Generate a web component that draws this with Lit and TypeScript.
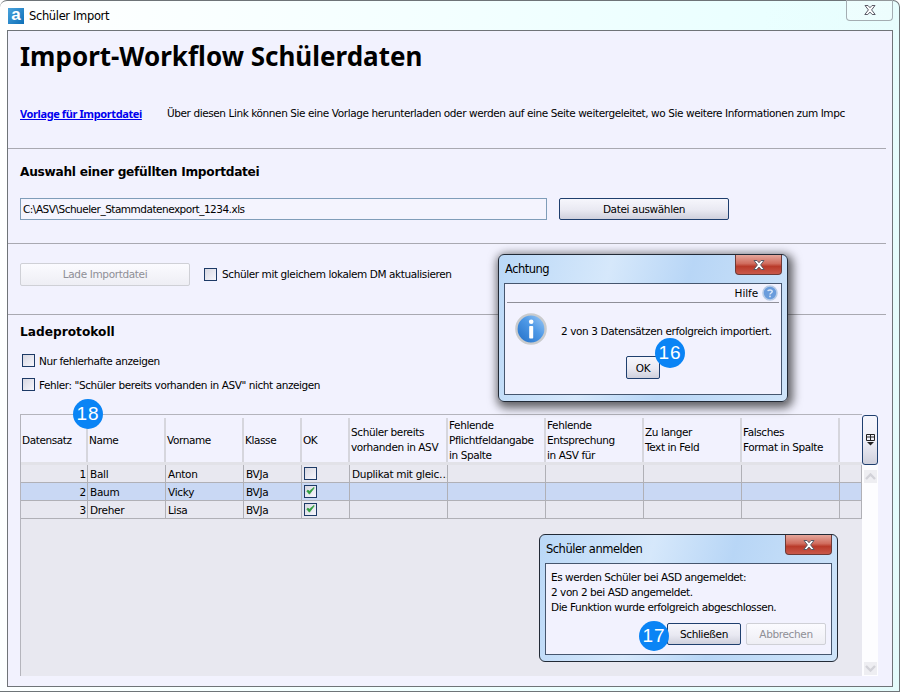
import { LitElement, html, css, svg } from "lit";
import { customElement } from "lit/decorators.js";

const closeX = svg`<svg class="xicon" width="16" height="12" viewBox="0 0 16 12"><path d="M3 1.5h3l2 2.2 2-2.2h3l-3.4 4.4 3.6 4.6h-3L8 8.1l-2.2 2.4h-3l3.6-4.6z" fill="#fff" stroke="#5a5a66" stroke-width="1" stroke-linejoin="round"/></svg>`;
const check = svg`<svg width="11" height="11" viewBox="0 0 11 11"><path d="M1.8 5.2l2.6 3 4.8-6.2-0.2-0.6-4.6 3.8-1.6-1.2z" fill="#2f9e3f" stroke="#2f9e3f" stroke-width=".7"/></svg>`;

const rows = [
  { n: 1, name: "Ball", first: "Anton", cls: "BVJa", ok: false, dup: "Duplikat mit gleic…", sel: false },
  { n: 2, name: "Baum", first: "Vicky", cls: "BVJa", ok: true, dup: "", sel: true },
  { n: 3, name: "Dreher", first: "Lisa", cls: "BVJa", ok: true, dup: "", sel: false },
];

@customElement("app-root")
export class AppRoot extends LitElement {
  static styles = css`
    :host { display: block; width: 900px; height: 692px; overflow: hidden; font-family: "DejaVu Sans", Verdana, sans-serif; font-size: 10.5px; color: #000; }
    * { box-sizing: border-box; }
    .window { position: relative; width: 900px; height: 692px; display: flex; flex-direction: column; padding: 0 6px 4px 7px;
      background: linear-gradient(100deg, #ffffff 0%, #f4ffff 40%, #eaffff 75%, #e4fbfb 100%);
      border: 1px solid #6e7478; border-width: 1px 1px 1px 0; border-radius: 7px 7px 0 0; }
    .titlebar { height: 29px; flex: none; display: flex; align-items: center; gap: 5px; padding: 0 0 0 1px; position: relative; font-size: 11.5px; letter-spacing: -0.35px; }
    .logo { width: 16px; height: 16px; background: linear-gradient(135deg, #4aa3dc, #0d6fb8); color: #fff; font: bold 17px/13px "Liberation Sans", sans-serif; text-align: center; letter-spacing: 0; }
    .win-close { position: absolute; right: 0; top: -1px; width: 47px; height: 21px; border: 1px solid #a4adb2; border-top: none; border-radius: 0 0 4px 4px; display: flex; align-items: center; justify-content: center; background: rgba(255,255,255,.25); }
    .panel { flex: 1; border: 1px solid #6f7478; background: #f2f2fe; display: flex; flex-direction: column; padding: 0 6px 0 0; min-height: 0; }
    h1 { margin: 9px 0 0 12px; font-size: 26px; line-height: 32px; font-weight: bold; font-family: "Noto Sans", sans-serif; letter-spacing: 0; }
    .linkrow { display: flex; margin: 33px 0 0 12px; height: 16px; align-items: center; white-space: nowrap; overflow: hidden; width: 826px; }
    .link { color: #0000ee; font-weight: bold; text-decoration: underline; width: 147px; flex: none; font-family: "Noto Sans", sans-serif; font-size: 11px; letter-spacing: -0.39px; }
    .hint { letter-spacing: -0.41px; }
    .hr { height: 1px; background: #a9a9b1; flex: none; }
    .hr1 { margin-top: 27px; }
    .hr2 { margin-top: 23px; }
    .hr3 { margin-top: 28px; }
    h2 { margin: 0 0 0 12px; font-size: 12.2px; line-height: 16px; font-weight: bold; letter-spacing: -0.28px; }
    .h2a { margin-top: 15px; }
    .h2b { margin-top: 9px; letter-spacing: 0; }
    .filerow { display: flex; margin: 18px 0 0 12px; gap: 12px; }
    .input { width: 527px; height: 22px; border: 1px solid #7f9db9; background: #f4f4fe; padding: 0 2px; line-height: 20px; letter-spacing: -0.5px; }
    .btn { display: flex; align-items: center; justify-content: center; border: 1px solid #1f3f6e; border-radius: 2px; background: linear-gradient(180deg, #f6f6fc 0%, #e9e9f2 55%, #cfd0dc 100%); letter-spacing: -0.36px; white-space: nowrap; }
    .btn.dis { border-color: #cfd0d6; color: #8f8f96; background: linear-gradient(180deg, #fbfbff, #eeeef4); }
    .file-btn { width: 170px; height: 22px; }
    .loadrow { display: flex; align-items: center; margin: 18px 0 0 12px; height: 24px; }
    .load-btn { width: 170px; height: 23px; margin-right: 14px; }
    .cb { width: 13px; height: 13px; border: 1px solid #1d3a66; background: linear-gradient(135deg, #d8d8e2, #f6f6fc); display: inline-flex; align-items: center; justify-content: center; flex: none; }
    .lab { display: flex; align-items: center; gap: 4px; white-space: nowrap; letter-spacing: -0.42px; }
    .loadrow .lab { gap: 5px; letter-spacing: -0.4px; }
    .checks { margin: 13px 0 0 14px; display: flex; flex-direction: column; gap: 9px; }
    .checks .lab { height: 15px; }
    .tablewrap { position: relative; margin: 22px 0 0 12px; width: 858px; height: 262px; display: flex; }
    .table { width: 842px; border: 1px solid #b4b4bc; border-right: none; border-bottom: none; display: flex; flex-direction: column; background: #e8e8f0; }
    .grid { display: grid; grid-template-columns: 67px 78px 78px 58px 48px 98px 98px 98px 98px 98px 22px; }
    .head { height: 50px; background: #f2f2fe; border-bottom: 3px solid #e2e2e8; padding-top: 3px; }
    .hc { border-right: 2px solid #d6d6dd; padding: 0 0 0 1px; line-height: 15px; display: flex; align-items: center; white-space: pre-line; letter-spacing: -0.4px; height: 44px; overflow: hidden; }
    .hc.last { border-right: none; }
    .row { height: 18px; background: #e8e8f0; }
    .row.sel { background: #c9d8f4; }
    .c { border-right: 1px solid #b0b0b6; border-bottom: 1px solid #b0b0b6; padding: 0 2px; line-height: 19px; white-space: nowrap; overflow: hidden; letter-spacing: -0.3px; }
    .c.num { text-align: right; padding-right: 1px; }
    .c.mid { display: flex; align-items: center; padding-left: 2px; }
    .side { width: 16px; flex: none; display: flex; flex-direction: column; padding-top: 1px; }
    .corner { height: 50px; flex: none; border: 1px solid #1f3f6e; border-radius: 3px; background: linear-gradient(180deg, #f6f6fc, #f0f0f8 50%, #cfd0dc); display: flex; justify-content: center; padding-top: 17px; }
    .track { flex: 1; background: #fdfdff; display: flex; flex-direction: column; justify-content: space-between; align-items: center; padding: 5px 0 1px; }
    .arrow { width: 13px; height: 13px; background: #eeeef2; display: flex; align-items: center; justify-content: center; }

    .dialog { position: absolute; border-radius: 6px; border: 1px solid #222a36; display: flex; flex-direction: column;
      background: linear-gradient(105deg, #bad8f7 0%, #d6e8fb 35%, #b8d6f6 60%, #cfe4f9 100%); }
    .d1 { left: 498px; top: 253px; width: 290px; height: 148px; box-shadow: 2px 3px 10px 3px rgba(0,0,0,.6); }
    .d2 { left: 539px; top: 533px; width: 299px; height: 128px; }
    .dtitle { height: 28px; flex: none; padding-left: 6px; line-height: 29px; font-size: 11.5px; letter-spacing: -0.5px; }
    .dclose { position: absolute; right: 5px; top: 0; width: 47px; height: 20px; border: 1px solid #6e3a36; border-top: none; border-radius: 0 0 4px 4px; background: linear-gradient(180deg, #e5a79c 0%, #d06c5e 45%, #b93a2a 60%, #c9584a 100%); display: flex; align-items: center; justify-content: center; }
    .dbody { flex: 1; margin: 0 5px 6px; border: 1px solid #46566e; background: #f2f2fe; display: flex; flex-direction: column; min-height: 0; }
    .hilfe { height: 19px; margin: 0 2px; border-bottom: 1px solid #8f8f98; display: flex; align-items: center; justify-content: flex-end; gap: 4px; padding-right: 1px; letter-spacing: -0.1px; flex: none; }
    .msg { display: flex; align-items: center; margin: 10px 0 0 10px; gap: 14px; letter-spacing: -0.4px; white-space: nowrap; }
    .msg span { margin-top: 4px; }
    .okrow { display: flex; justify-content: center; margin-top: 11px; }
    .ok { width: 34px; height: 23px; }
    .text2 { padding: 6px 5px 0; line-height: 15px; white-space: pre-line; letter-spacing: -0.45px; }
    .btns2 { display: flex; justify-content: flex-end; gap: 5px; margin: 8px 5px 0 0; }
    .b-s { width: 74px; height: 22px; }
    .b-a { width: 80px; height: 22px; }
    .badge { position: absolute; border-radius: 50%; background: #0a84f5; color: #fff; width: 30px; height: 30px; font: 19px/30px "Liberation Sans", sans-serif; text-align: center; letter-spacing: 1px; }
    .b16 { left: 655px; top: 337px; }
    .b17 { left: 639px; top: 620px; }
    .b18 { left: 73px; top: 398px; }
  `;

  render() {
    const headers = ["Datensatz", "Name", "Vorname", "Klasse", "OK", "Schüler bereits\nvorhanden in ASV", "Fehlende\nPflichtfeldangabe\nin Spalte", "Fehlende\nEntsprechung\nin ASV für", "Zu langer\nText in Feld", "Falsches\nFormat in Spalte", ""];
    const info = (s: number) => svg`<svg width=${s} height=${s} viewBox="0 0 32 32"><defs><linearGradient id="ig" x1="0" y1="1" x2="1" y2="0"><stop offset="0" stop-color="#1f6cc4"/><stop offset=".55" stop-color="#4d98e6"/><stop offset="1" stop-color="#a6cef6"/></linearGradient></defs><circle cx="16" cy="16" r="14.6" fill="url(#ig)" stroke="#c9cbcd" stroke-width="2.4"/><circle cx="16.2" cy="8.8" r="2.3" fill="#fff"/><rect x="14.2" y="13" width="4" height="12.5" rx=".8" fill="#fff"/></svg>`;
    const help = svg`<svg width="16" height="16" viewBox="0 0 16 16"><circle cx="8" cy="8" r="7" fill="#6a9cdc" stroke="#b7cbe6" stroke-width="1.6"/><path d="M5.8 6.2c.2-1.6 4.4-2 4.4.3 0 1.5-2.2 1.5-2.2 3" fill="none" stroke="#dbe8f8" stroke-width="1.5"/><rect x="7.2" y="10.6" width="1.6" height="1.6" fill="#dbe8f8"/></svg>`;
    return html`
      <div class="window">
        <div class="titlebar">
          <div class="logo">a</div><span>Schüler Import</span>
          <div class="win-close">${closeX}</div>
        </div>
        <div class="panel">
          <h1>Import-Workflow Schülerdaten</h1>
          <div class="linkrow"><span class="link">Vorlage für Importdatei</span><span class="hint">Über diesen Link können Sie eine Vorlage herunterladen oder werden auf eine Seite weitergeleitet, wo Sie weitere Informationen zum Impc</span></div>
          <div class="hr hr1"></div>
          <h2 class="h2a">Auswahl einer gefüllten Importdatei</h2>
          <div class="filerow"><div class="input">C:\\ASV\\Schueler_Stammdatenexport_1234.xls</div><div class="btn file-btn">Datei auswählen</div></div>
          <div class="hr hr2"></div>
          <div class="loadrow"><div class="btn dis load-btn">Lade Importdatei</div><label class="lab"><span class="cb"></span>Schüler mit gleichem lokalem DM aktualisieren</label></div>
          <div class="hr hr3"></div>
          <h2 class="h2b">Ladeprotokoll</h2>
          <div class="checks">
            <label class="lab"><span class="cb"></span>Nur fehlerhafte anzeigen</label>
            <label class="lab"><span class="cb"></span>Fehler: "Schüler bereits vorhanden in ASV" nicht anzeigen</label>
          </div>
          <div class="tablewrap">
            <div class="table">
              <div class="grid head">${headers.map((h, i) => html`<div class="hc ${i === 10 ? "last" : ""}">${h}</div>`)}</div>
              ${rows.map((r) => html`<div class="grid row ${r.sel ? "sel" : ""}">
                <div class="c num">${r.n}</div><div class="c">${r.name}</div><div class="c">${r.first}</div><div class="c">${r.cls}</div>
                <div class="c mid"><span class="cb">${r.ok ? check : ""}</span></div>
                <div class="c">${r.dup}</div><div class="c"></div><div class="c"></div><div class="c"></div><div class="c"></div><div class="c"></div>
              </div>`)}
            </div>
            <div class="side">
              <div class="corner"><svg width="11" height="13" viewBox="0 0 11 13"><path d="M1.5 1.5h8v6h-8zM1.5 4h8M5.5 1.5v6" fill="none" stroke="#222" stroke-width="1"/><path d="M2 9h7l-3.5 3.5z" fill="#222"/></svg></div>
              <div class="track">
                <div class="arrow"><svg width="11" height="7" viewBox="0 0 11 7"><path d="M1 6l4.5-4.5L10 6" fill="none" stroke="#d2d2d8" stroke-width="2.4"/></svg></div>
                <div class="arrow"><svg width="11" height="7" viewBox="0 0 11 7"><path d="M1 1l4.5 4.5L10 1" fill="none" stroke="#d2d2d8" stroke-width="2.4"/></svg></div>
              </div>
            </div>
          </div>
        </div>

        <div class="dialog d1">
          <div class="dtitle">Achtung</div>
          <div class="dclose">${closeX}</div>
          <div class="dbody">
            <div class="hilfe">Hilfe ${help}</div>
            <div class="msg">${info(32)}<span>2 von 3 Datensätzen erfolgreich importiert.</span></div>
            <div class="okrow"><div class="btn ok">OK</div></div>
          </div>
        </div>
        <div class="dialog d2">
          <div class="dtitle">Schüler anmelden</div>
          <div class="dclose">${closeX}</div>
          <div class="dbody">
            <div class="text2">Es werden Schüler bei ASD angemeldet:
2 von 2 bei ASD angemeldet.
Die Funktion wurde erfolgreich abgeschlossen.</div>
            <div class="btns2"><div class="btn b-s">Schließen</div><div class="btn dis b-a">Abbrechen</div></div>
          </div>
        </div>
        <div class="badge b16">16</div>
        <div class="badge b17">17</div>
        <div class="badge b18">18</div>
      </div>
    `;
  }
}
